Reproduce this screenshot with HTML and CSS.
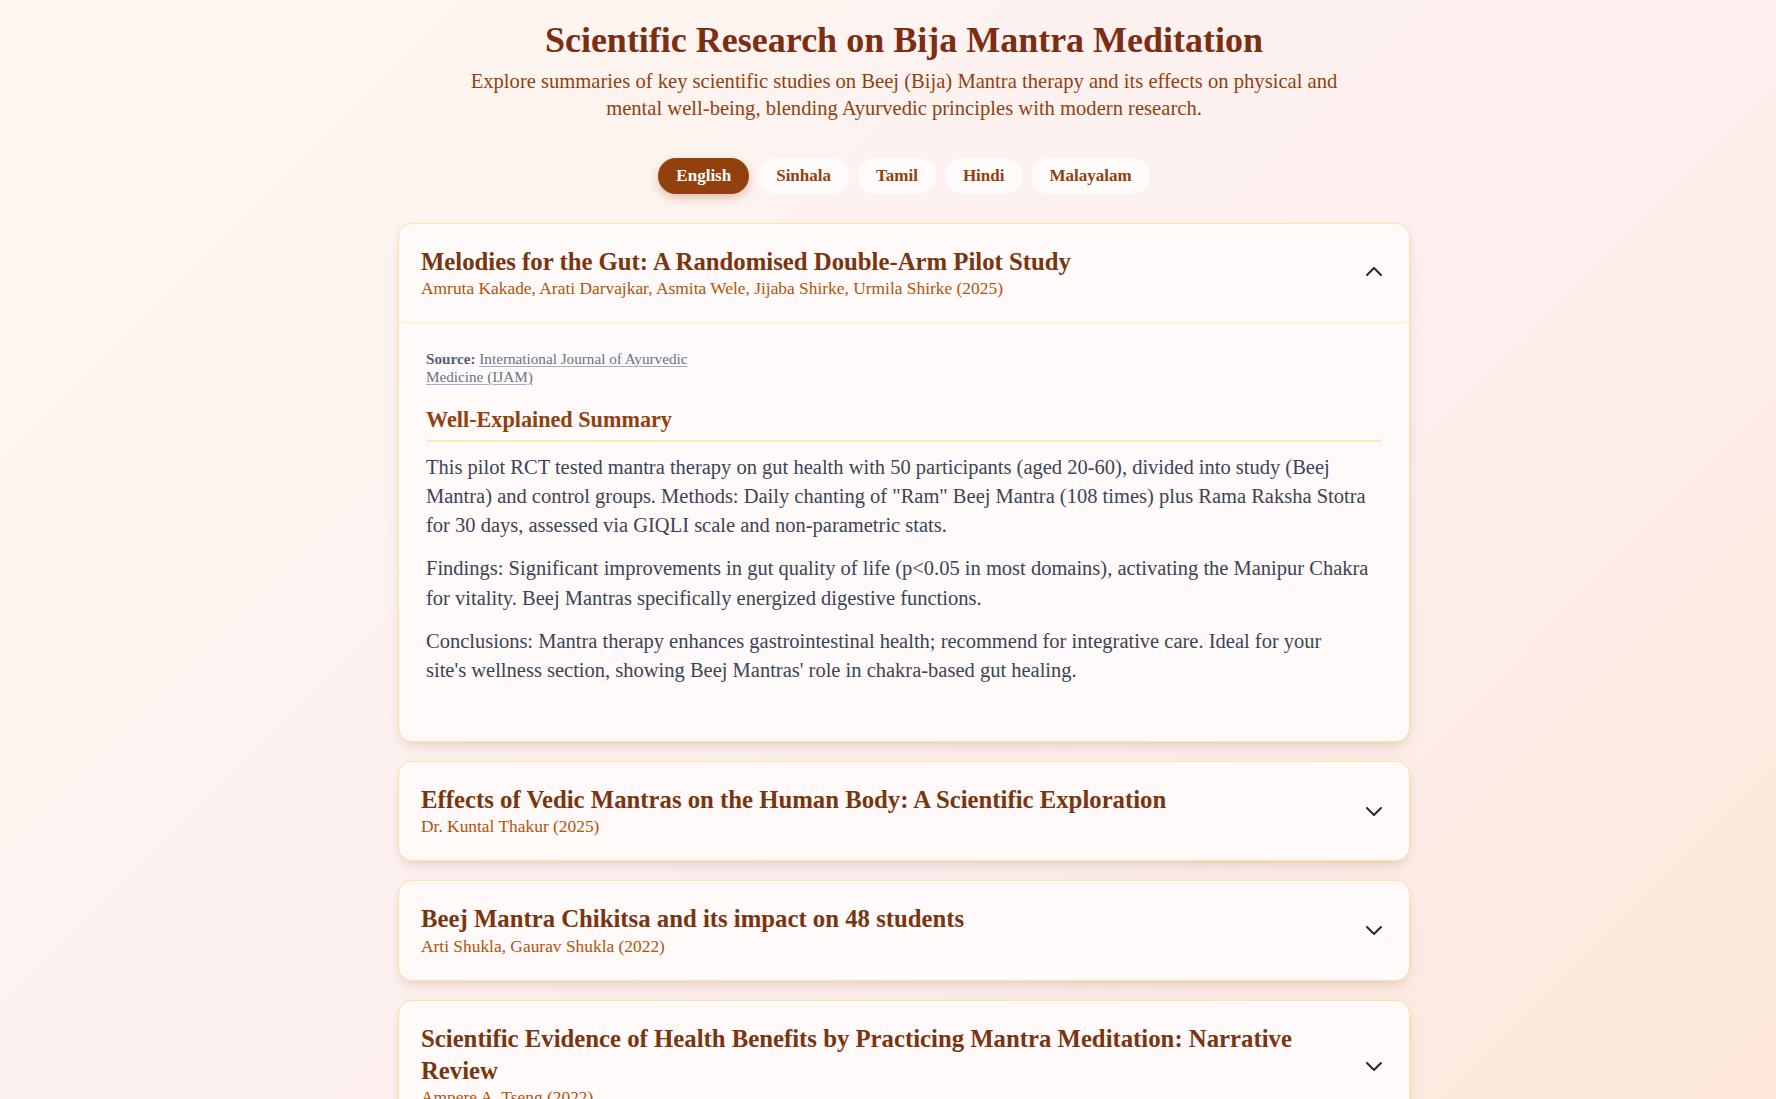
FILE: index.html
```html
<!DOCTYPE html>
<html lang="en">
<head>
<meta charset="utf-8">
<title>Scientific Research on Bija Mantra Meditation</title>
<link rel="stylesheet" href="styles.css">
</head>
<body>
<main class="page">
  <div class="container">
    <header class="hero">
      <h1 class="hero-title">Scientific Research on Bija Mantra Meditation</h1>
      <p class="hero-sub">Explore summaries of key scientific studies on Beej (Bija) Mantra therapy and its effects on physical and mental well-being, blending Ayurvedic principles with modern research.</p>
      <nav class="lang-switch">
        <button class="lang-btn active">English</button>
        <button class="lang-btn">Sinhala</button>
        <button class="lang-btn">Tamil</button>
        <button class="lang-btn">Hindi</button>
        <button class="lang-btn">Malayalam</button>
      </nav>
    </header>

    <section class="study-list">
      <article class="study open">
        <div class="study-head">
          <div class="study-titles">
            <h3 class="study-title">Melodies for the Gut: A Randomised Double-Arm Pilot Study</h3>
            <p class="study-authors">Amruta Kakade, Arati Darvajkar, Asmita Wele, Jijaba Shirke, Urmila Shirke (2025)</p>
          </div>
          <svg class="chevron" viewBox="0 0 24 24" width="24" height="24" fill="none"><path d="M5 15l7-7 7 7" stroke-linecap="round" stroke-linejoin="round"/></svg>
        </div>
        <div class="study-body">
          <p class="source"><strong>Source:</strong> <a href="#">International Journal of Ayurvedic Medicine (IJAM)</a></p>
          <h4 class="summary-title">Well-Explained Summary</h4>
          <p class="summary-text">This pilot RCT tested mantra therapy on gut health with 50 participants (aged 20-60), divided into study (Beej Mantra) and control groups. Methods: Daily chanting of "Ram" Beej Mantra (108 times) plus Rama Raksha Stotra for 30 days, assessed via GIQLI scale and non-parametric stats.</p>
          <p class="summary-text">Findings: Significant improvements in gut quality of life (p&lt;0.05 in most domains), activating the Manipur Chakra for vitality. Beej Mantras specifically energized digestive functions.</p>
          <p class="summary-text">Conclusions: Mantra therapy enhances gastrointestinal health; recommend for integrative care. Ideal for your site's&nbsp;wellness section, showing Beej Mantras' role in chakra-based gut healing.</p>
        </div>
      </article>

      <article class="study">
        <div class="study-head">
          <div class="study-titles">
            <h3 class="study-title">Effects of Vedic Mantras on the Human Body: A Scientific Exploration</h3>
            <p class="study-authors">Dr. Kuntal Thakur (2025)</p>
          </div>
          <svg class="chevron" viewBox="0 0 24 24" width="24" height="24" fill="none"><path d="M19 9l-7 7-7-7" stroke-linecap="round" stroke-linejoin="round"/></svg>
        </div>
      </article>

      <article class="study">
        <div class="study-head">
          <div class="study-titles">
            <h3 class="study-title">Beej Mantra Chikitsa and its impact on 48 students</h3>
            <p class="study-authors">Arti Shukla, Gaurav Shukla (2022)</p>
          </div>
          <svg class="chevron" viewBox="0 0 24 24" width="24" height="24" fill="none"><path d="M19 9l-7 7-7-7" stroke-linecap="round" stroke-linejoin="round"/></svg>
        </div>
      </article>

      <article class="study">
        <div class="study-head">
          <div class="study-titles">
            <h3 class="study-title">Scientific Evidence of Health Benefits by Practicing Mantra Meditation: Narrative Review</h3>
            <p class="study-authors">Ampere A. Tseng (2022)</p>
          </div>
          <svg class="chevron" viewBox="0 0 24 24" width="24" height="24" fill="none"><path d="M19 9l-7 7-7-7" stroke-linecap="round" stroke-linejoin="round"/></svg>
        </div>
      </article>
    </section>
  </div>
</main>
</body>
</html>
```

FILE: styles.css
```css
* { box-sizing: border-box; }

html, body { margin: 0; }

body {
  font-family: "Liberation Serif", "Times New Roman", serif;
  color: #3a4455;
  min-height: 100vh;
  background: linear-gradient(135deg, #fef8ef 0%, #fdf2f0 38%, #fdefee 62%, #fde8d9 100%) fixed;
}

.page {
  padding: 20px 0 40px 32px;
}

.container {
  max-width: 1012px;
  margin: 0 auto;
}

/* Hero */
.hero { text-align: center; }

.hero-title {
  margin: 0;
  font-size: 36px;
  line-height: 40px;
  font-weight: 700;
  color: #7c2d12;
}

.hero-sub {
  max-width: 896px;
  margin: 8px auto 0;
  font-size: 20.6px;
  line-height: 27px;
  color: #92400e;
}

.lang-switch {
  display: flex;
  justify-content: center;
  gap: 9px;
  margin-top: 36px;
}

.lang-btn {
  font-family: inherit;
  font-size: 17px;
  line-height: 24px;
  font-weight: 700;
  padding: 4px 16px;
  border: 2px solid transparent;
  border-radius: 999px;
  background: #fffbfa;
  color: #92400e;
  cursor: pointer;
}

.lang-btn.active {
  background: #92400e;
  color: #ffffff;
  box-shadow: 0 4px 10px rgba(146, 64, 14, 0.28);
}

/* Studies */
.study-list {
  display: flex;
  flex-direction: column;
  gap: 19px;
  margin-top: 28.5px;
}

.study {
  background: #fffaf9;
  border: 1px solid #fce5a0;
  border-radius: 14px;
  box-shadow: 0 8px 18px -6px rgba(90, 45, 30, 0.16), 0 2px 6px rgba(90, 45, 30, 0.05);
  overflow: hidden;
}

.study-head {
  display: flex;
  align-items: center;
  justify-content: space-between;
  gap: 16px;
  padding: 22px 23px 22px 22px;
}

.study.open .study-head {
  border-bottom: 1px solid #fdf0c4;
}

.study-titles { min-width: 0; }

.study-title {
  margin: 0;
  font-size: 24.75px;
  line-height: 32px;
  font-weight: 700;
  color: #78350f;
}

.study-authors {
  margin: -1.5px 0 0;
  font-size: 17.4px;
  line-height: 24px;
  color: #b45309;
}

.chevron {
  flex-shrink: 0;
  stroke: #1e293b;
  stroke-width: 2;
  margin-top: -1px;
}

.study-body {
  padding: 26.5px 27px 55.5px;
}

.source {
  width: 300px;
  margin: 0;
  font-size: 15.2px;
  line-height: 18.5px;
  color: #64748b;
}

.source strong {
  color: #556274;
}

.source a {
  color: #64748b;
  text-decoration: underline;
  text-decoration-color: #a3adbd;
  text-underline-offset: 2px;
}

.summary-title {
  margin: 19px 0 0;
  padding-bottom: 6px;
  border-bottom: 2px solid #fdebb2;
  font-size: 22.2px;
  line-height: 28px;
  font-weight: 700;
  color: #92400e;
}

.summary-text {
  margin: 14px 0 0;
  font-size: 20.5px;
  line-height: 29.25px;
}

.summary-title + .summary-text {
  margin-top: 11px;
}
```
